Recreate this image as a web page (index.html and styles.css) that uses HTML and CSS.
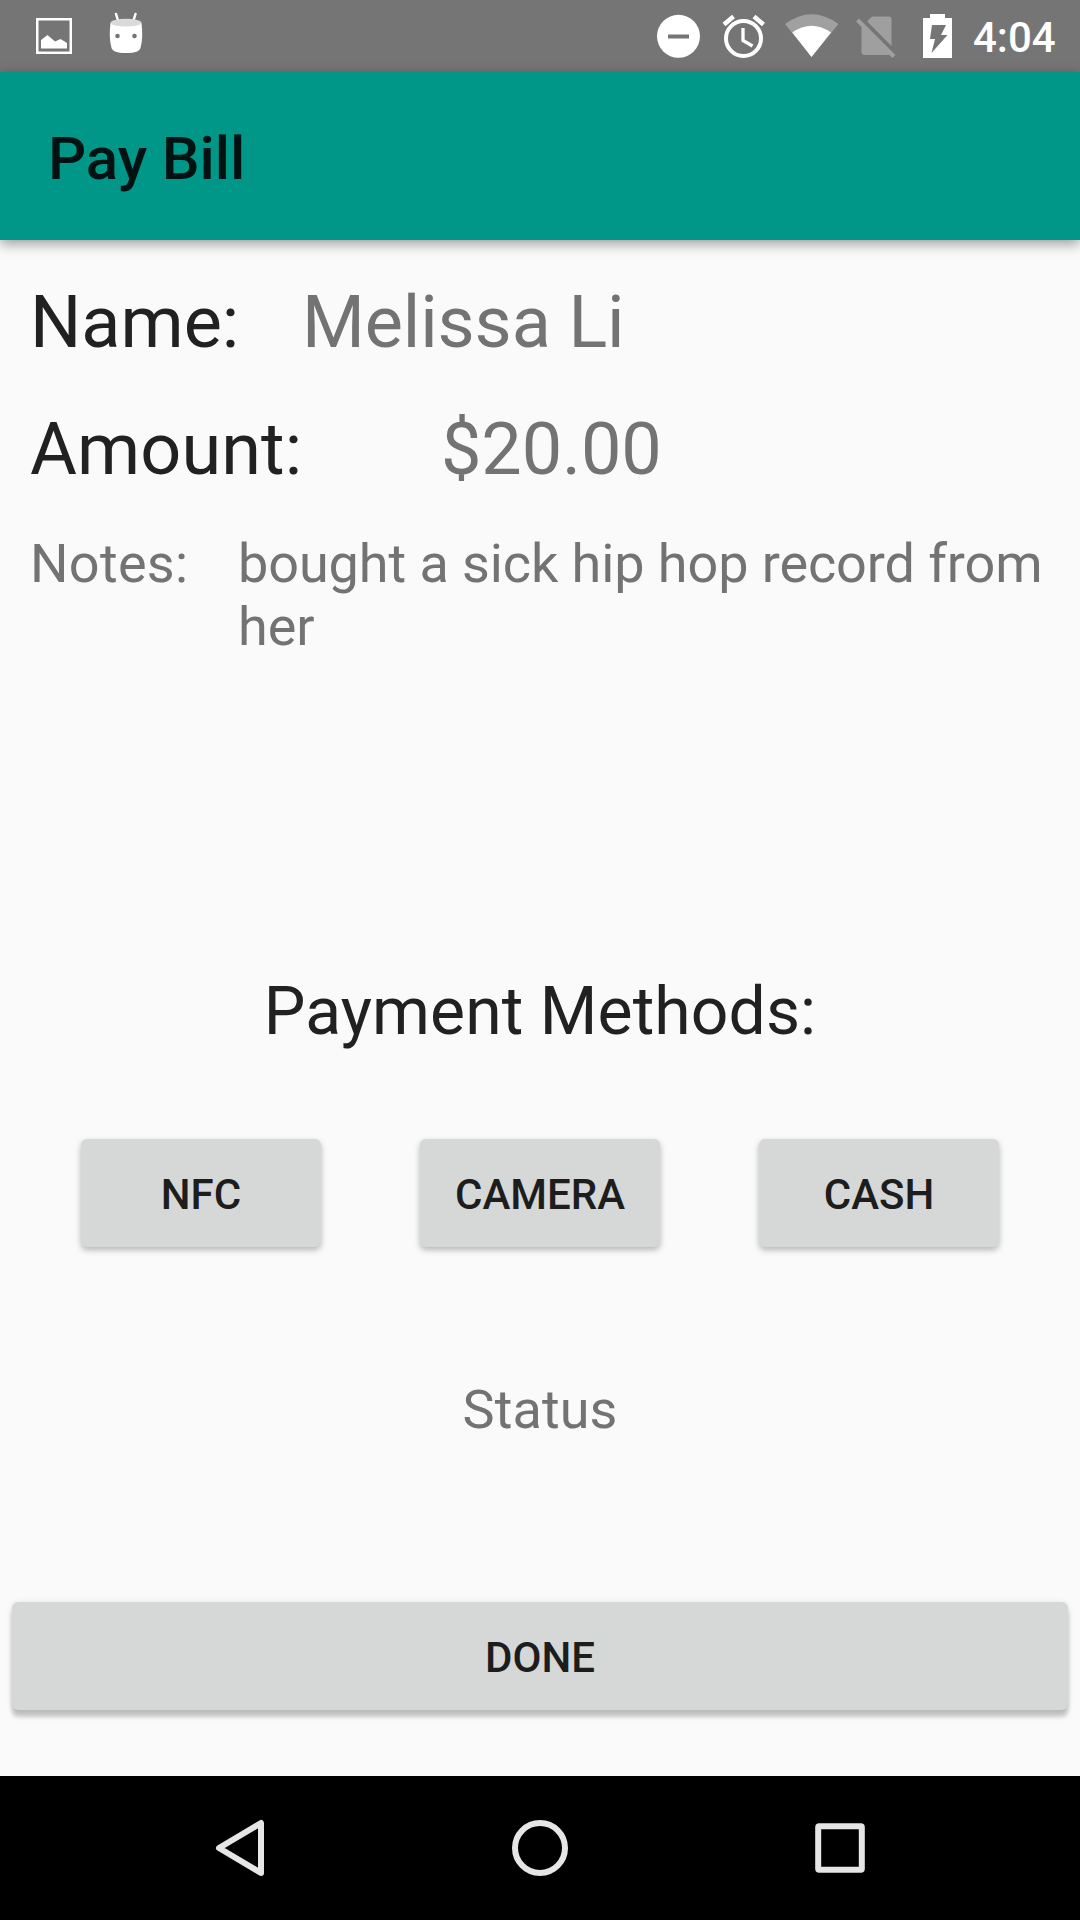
FILE: index.html
```html
<!DOCTYPE html>
<html lang="en">
<head>
<meta charset="utf-8">
<title>Pay Bill</title>
<link rel="stylesheet" href="styles.css">
</head>
<body>
<div class="screen">
  <header class="status-bar">
    <div class="notifications">
      <svg width="36" height="72" viewBox="0 0 36 72"><rect x="1.25" y="19.25" width="33.5" height="33.5" fill="none" stroke="#fff" stroke-width="2.5"/><path fill="#fff" d="M5 48.500V40l6.500-5 7.500 6.500 5.500-2.500 6.500 4v5.500z"/></svg>
      <svg width="36" height="72" viewBox="0 0 36 72"><path d="M8 14l2.500 8M27.500 14l-2.500 8" stroke="#fff" stroke-width="2.500" stroke-linecap="round"/><path fill="#fff" d="M2.500 23h31c1 8 1.300 17-1 25-1 3-5 5-14.500 5s-13.500-2-14.500-5C1.200 40 1.500 31 2.500 23z"/><ellipse cx="18" cy="22.700" rx="15.500" ry="3.900" fill="#dadada"/><circle cx="9.500" cy="36" r="2.300" fill="#757575"/><circle cx="26.500" cy="36" r="2.300" fill="#757575"/></svg>
    </div>
    <div class="indicators">
      <svg width="44" height="72" viewBox="0 0 44 72"><circle cx="21.500" cy="36.300" r="21.500" fill="#fff"/><path d="M11 34.500h21v4H11z" fill="#757575"/></svg>
      <svg width="44" height="72" viewBox="0 0 44 72"><g fill="none" stroke="#fff"><circle cx="21.500" cy="38.500" r="17.500" stroke-width="4"/><path d="M21 28v12.500l9.500 5.500" stroke-width="3.300"/><path d="M2 24.500l9.500-8M32 16.500l9.500 8" stroke-width="4.500"/></g></svg>
      <svg width="54" height="72" viewBox="0 0 54 72"><path d="M0 24Q26.500 4.500 53.500 24L26.500 57z" fill="#a0a0a0"/><path d="M7.300 32.500Q26.500 19 46 32.500L26.500 57z" fill="#fff"/></svg>
      <svg width="40" height="72" viewBox="0 0 40 72"><path fill="#9f9f9f" d="M16 16.500h16.500q3 0 3 3v26.500L11.700 22v-1.200zM5.500 23.500L36 54q-1 1-3 1H9q-3.500 0-3.500-3z"/><path d="M1.500 20L38 56.500" stroke="#9f9f9f" stroke-width="4"/></svg>
      <svg width="30" height="72" viewBox="0 0 30 72"><path fill="#fff" d="M0 18h7v-4h15v4h7v40H0z"/><path fill="#757575" d="M9 25h14l-5 10h6.500L8.500 53l3.500-14H7z"/></svg>
      <span class="clock">4:04</span>
    </div>
  </header>
  <div class="app-bar"><h1 class="title">Pay Bill</h1></div>
  <main class="content">
    <div class="row row-name"><span class="label">Name:</span><span class="value">Melissa Li</span></div>
    <div class="row row-amount"><span class="label">Amount:</span><span class="value">$20.00</span></div>
    <div class="row row-notes"><span class="label">Notes:</span><span class="value">bought a sick hip hop record from her</span></div>
    <h2 class="methods-title">Payment Methods:</h2>
    <div class="methods">
      <button class="button">NFC</button>
      <button class="button">CAMERA</button>
      <button class="button">CASH</button>
    </div>
    <p class="status">Status</p>
    <button class="button done">DONE</button>
  </main>
  <nav class="nav-bar">
    <svg width="60" height="60" viewBox="0 0 60 60"><path d="M51 5v50L9 30z" fill="none" stroke="#e6e6e6" stroke-width="6" stroke-linejoin="round"/></svg>
    <svg width="60" height="60" viewBox="0 0 60 60"><circle cx="30" cy="30" r="25" fill="none" stroke="#e6e6e6" stroke-width="6"/></svg>
    <svg width="60" height="60" viewBox="0 0 60 60"><rect x="8.200" y="8.200" width="43.600" height="43.600" rx="1" fill="none" stroke="#e6e6e6" stroke-width="6"/></svg>
  </nav>
</div>
</body>
</html>
```

FILE: styles.css
```css
* { box-sizing: border-box; }
body { margin: 0; font-family: Roboto, sans-serif; }
h1, h2, p { margin: 0; font-weight: 400; }
svg { display: block; flex: none; }

.screen {
  display: flex;
  flex-direction: column;
  width: 1080px;
  height: 1920px;
  background: #fafafa;
  overflow: hidden;
}

.status-bar {
  display: flex;
  justify-content: space-between;
  height: 72px;
  padding: 0 24px 0 36px;
  background: #757575;
}
.notifications { display: flex; gap: 36px; }
.indicators { display: grid; grid-template-columns: 65px 63px 71px 67px 50px 83px; }
.clock {
  color: #fff;
  font-size: 42px;
  font-weight: 500;
  line-height: 76px;
}

.app-bar {
  display: flex;
  align-items: center;
  height: 168px;
  padding: 4px 48px 0;
  background: #009688;
  box-shadow: 0 4px 12px rgba(0, 0, 0, .38);
}
.title {
  color: rgba(0, 0, 0, .87);
  font-size: 60px;
  font-weight: 500;
  letter-spacing: -.1px;
}

.content {
  display: flex;
  flex: 1;
  flex-direction: column;
  padding: 41px 12px 66px;
}
.row {
  display: flex;
  padding-left: 18px;
  color: #737373;
  font-size: 72px;
  line-height: 84px;
}
.row .label { flex: none; color: #212121; }
.row .value { letter-spacing: -.12px; }
.row-name .label { width: 272px; }
.row-amount { margin-top: 43px; }
.row-amount .label { width: 411px; letter-spacing: .1px; }
.row-notes {
  height: 126px;
  margin-top: 40px;
  font-size: 54px;
  line-height: 63px;
}
.row-notes .label { width: 208px; color: #737373; letter-spacing: .3px; }
.row-notes .value { letter-spacing: -.09px; }

.methods-title {
  margin-top: 315px;
  color: #212121;
  font-size: 66px;
  line-height: 77px;
  letter-spacing: .1px;
  text-align: center;
}
.methods {
  display: flex;
  justify-content: center;
  gap: 99px;
  margin-top: 89px;
}
.button {
  width: 240px;
  height: 108px;
  padding: 2px 0 0;
  border: 0;
  border-radius: 6px;
  background: #d6d7d7;
  box-shadow: 0 3px 6px rgba(0, 0, 0, .28);
  color: #1d1d1d;
  font: 500 42px/49px Roboto, sans-serif;
}
.status {
  margin-top: 131px;
  color: #737373;
  font-size: 54px;
  line-height: 63px;
  letter-spacing: .1px;
  text-align: center;
}
.done {
  width: 100%;
  margin-top: auto;
  box-shadow: 0 7px 4px rgba(0, 0, 0, .2), 0 1px 6px rgba(0, 0, 0, .12);
}

.nav-bar {
  display: flex;
  justify-content: center;
  align-items: center;
  gap: 240px;
  height: 144px;
  background: #000;
}
```
